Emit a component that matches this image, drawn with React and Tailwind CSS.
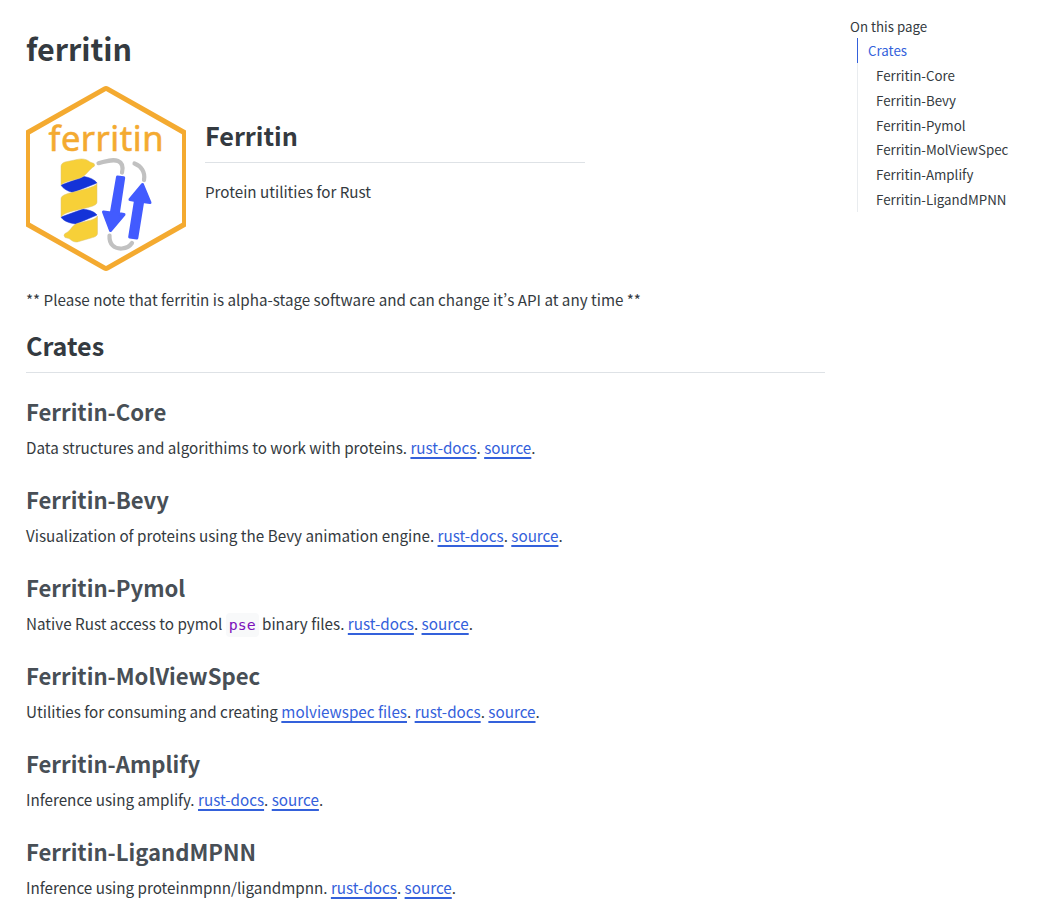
const DOC_LINKS = ["rust-docs", "source"];

function Link({ children }) {
  return (
    <a
      href="#"
      className="text-[#3461db] underline decoration-[#3461db] decoration-2 underline-offset-3"
    >
      {children}
    </a>
  );
}

function Logo() {
  return (
    <svg viewBox="0 0 160 185" className="block h-[185px] w-40 shrink-0">
      <path
        d="M77.500 .8Q80-.6 82.500 .8L160 44.500V140.500L82.500 184.200Q80 185.600 77.500 184.200L0 140.500V44.500ZM80 5 4 48.300V136.700L80 180 156 136.700V48.300Z"
        fill="#f4aa30"
        fillRule="evenodd"
      />
      <text
        x="22.500"
        y="65"
        textLength="115"
        lengthAdjust="spacing"
        fill="#f4aa30"
        stroke="#f4aa30"
        strokeWidth="0.6"
        fontSize="34.500"
        className="font-['Noto_Sans',sans-serif]"
      >
        ferritin
      </text>
      <g fill="none" stroke="#c1c1c1" strokeWidth="4.200" strokeLinecap="round">
        <path d="M72.500 77.200C80 75 87 73 92 75C97 77 97.300 81 96 86.500" />
        <path d="M108.500 77.500C115 80 119.500 86 118 94" />
        <path d="M83.500 149.500C83 158 88 163 96 162.500C101 162 104 160 106 157" />
      </g>
      <g fill="#1433d8" stroke="#1433d8" strokeWidth="0.5">
        <path d="M35 99 58 90.500C64 91.500 69 94 71 97L47 106.500C41 105 37 102.500 35 99Z" />
        <path d="M35 131 57 123C64 124 69 126 71 129L50 138C42 137 37 134.500 35 131Z" />
      </g>
      <g fill="#f7d038" stroke="#dcc476" strokeWidth="0.500">
        <path d="M35 99V80.500C35 78 36.500 77 39 76L51 73.500C57 72 61 73.500 64 76L68 77.500Q70 80 66.500 81.500C61 86 60 90 53 92.500C44 95 38 96 35 99Z" />
        <path d="M35 131V113C35 110 38 109 42 107.500L61 102.500C66 101 70 99.500 71 97.500V116C71 119 67 120 62 121.500L47 125C41 126.500 37 128 35 131Z" />
        <path d="M71.500 130V147C71.500 150 69 151 65 152L53 155.500C49 157 46 155 43 152.500L39 151.500Q37 149 39 147.500C45 145 45 140 51 137.500L61 135C66 134 70 132.500 71.500 130Z" />
      </g>
      <g fill="#425bff" stroke="#425bff" strokeWidth="3" strokeLinejoin="round">
        <path d="M91.500 91 97.700 91.800 92.300 127.500 98 128.500 84.500 144.500 77.500 126 85.300 127Z" />
        <path d="M116.500 98.500 124 116.500 116.700 115.500 110.800 152 103.700 151 109.500 114.500 104 113.500Z" />
      </g>
    </svg>
  );
}

const crates = [
  { name: "Ferritin-Core", body: "Data structures and algorithims to work with proteins. " },
  { name: "Ferritin-Bevy", body: "Visualization of proteins using the Bevy animation engine. " },
  {
    name: "Ferritin-Pymol",
    body: (
      <>
        Native Rust access to pymol{" "}
        <code className="rounded-sm bg-[#f8f9fa] px-[3px] py-[3px] font-['DejaVu_Sans_Mono',monospace] text-[14.875px] text-[#7d12ba]">
          pse
        </code>{" "}
        binary files.{" "}
      </>
    ),
  },
  {
    name: "Ferritin-MolViewSpec",
    body: (
      <>
        Utilities for consuming and creating <Link>molviewspec files</Link>.{" "}
      </>
    ),
  },
  { name: "Ferritin-Amplify", body: "Inference using amplify. " },
  { name: "Ferritin-LigandMPNN", body: "Inference using proteinmpnn/ligandmpnn. " },
];

function Crate({ name, body }) {
  return (
    <section className="h-[88px]">
      <h3 className="text-[22.12px] leading-[30px] font-bold text-[#484f56]">{name}</h3>
      <p className="mt-[9px] text-[15.22px] leading-[25px]">
        {body}
        {DOC_LINKS.map((label, i) => (
          <span key={label}>
            {i > 0 && " "}
            <Link>{label}</Link>.
          </span>
        ))}
      </p>
    </section>
  );
}

export default function App() {
  return (
    <div className="flex h-[913px] overflow-hidden bg-white pl-[26px] font-['Noto_Sans_CJK_SC',sans-serif] text-[15.2px] text-[#343a40]">
      <main className="w-[799px] shrink-0 pt-7">
        <h1 className="text-[30.44px] leading-[41px] font-bold">ferritin</h1>
        <div className="mt-[17px] flex gap-5">
          <Logo />
          <div className="w-[379px] pt-[31px]">
            <h2 className="-ml-px h-[46px] border-b border-[#dee2e6] text-[25.2px] leading-[36px] font-bold">Ferritin</h2>
            <p className="mt-4 -ml-px leading-[25px]">Protein utilities for Rust</p>
          </div>
        </div>
        <p className="mt-4 leading-[25px]">
          ** Please note that ferritin is alpha-stage software and can change it
          <span className="[font-feature-settings:'pwid']">’</span>s API at any time **
        </p>
        <h2 className="mt-[15px] h-[46px] border-b border-[#dee2e6] text-[25.1px] leading-[36px] font-bold">Crates</h2>
        <div className="mt-[23px]">
          {crates.map((crate) => (
            <Crate key={crate.name} {...crate} />
          ))}
        </div>
      </main>
      <nav className="ml-[25px] pt-4 text-[13.32px]">
        <h2 className="h-[22px] leading-[22px]">On this page</h2>
        <ul className="ml-[7px] border-l border-[#e9ecef] whitespace-nowrap">
          <li className="-ml-px h-[25px] border-l border-[#3461db] pl-2.5 leading-[26px] text-[#3461db]">Crates</li>
          {crates.map(({ name }) => (
            <li key={name} className="h-[24.8px] pl-[18px] leading-[25.4px]">
              {name}
            </li>
          ))}
        </ul>
      </nav>
    </div>
  );
}
